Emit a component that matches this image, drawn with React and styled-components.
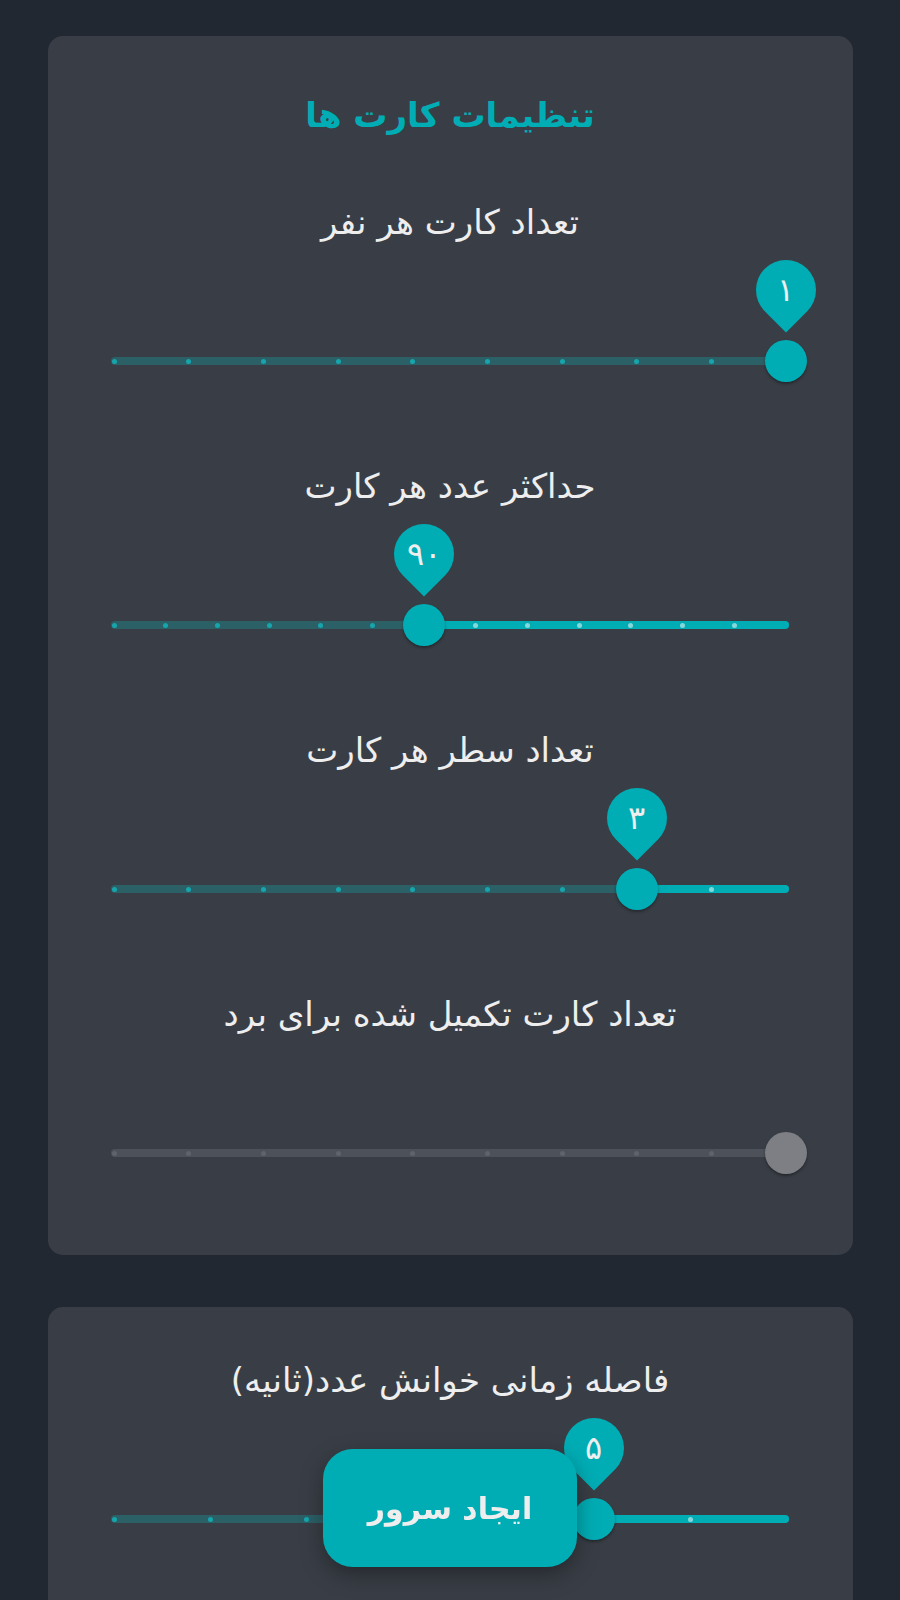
import React from "react";
import styled, { createGlobalStyle } from "styled-components";

const Teal = "#00adb5";
const Text = "#eeeeee";

const GlobalStyle = createGlobalStyle`
  html, body {
    margin: 0;
    padding: 0;
    background-color: #222831;
  }
  body {
    font-family: "DejaVu Sans", sans-serif;
    color: ${Text};
  }
`;

export const Page = styled.div`
  display: flex;
  flex-direction: column;
  gap: 52px;
  padding: 36px 0 40px;
  direction: rtl;
`;

export const Card = styled.div`
  display: flex;
  flex-direction: column;
  margin: 0 47px 0 48px;
  padding: ${(p) => (p.$first ? "49px" : "48px")} 64px 80px 63px;
  background-color: #393e46;
  border-radius: 15px;
`;

export const Title = styled.h1`
  margin: 0 0 52px;
  height: 60px;
  line-height: 60px;
  text-align: center;
  font-size: 34px;
  font-weight: bold;
  color: ${Teal};
`;

export const Setting = styled.div`
  display: flex;
  flex-direction: column;
  & + & {
    margin-top: 78px;
  }
`;

export const Label = styled.div`
  height: 50px;
  line-height: 50px;
  margin-bottom: 92px;
  text-align: center;
  font-size: 34px;
  white-space: nowrap;
`;

export const SliderRoot = styled.div`
  position: relative;
  height: 44px;
  direction: ltr;
`;

export const Rail = styled.div`
  position: absolute;
  left: 0;
  right: 0;
  top: 18px;
  height: 8px;
  border-radius: 4px;
  background-color: ${(p) => (p.$disabled ? "#4d5159" : "#2b6067")};
`;

export const Track = styled.div`
  position: absolute;
  right: 0;
  top: 18px;
  height: 8px;
  border-radius: 4px;
  background-color: ${Teal};
`;

export const Mark = styled.span`
  position: absolute;
  top: 19.5px;
  width: 5px;
  height: 5px;
  margin-left: -2.5px;
  border-radius: 50%;
  background-color: ${(p) =>
    p.$disabled ? "#60636a" : p.$active ? "#86d6da" : "#17a5ad"};
`;

export const Thumb = styled.span`
  position: absolute;
  top: 1px;
  width: 42px;
  height: 42px;
  margin-left: -21px;
  border-radius: 50%;
  background-color: ${(p) => (p.$disabled ? "#7d7f85" : Teal)};
  box-shadow: 0 2px 3px rgba(0, 0, 0, 0.35);
`;

export const ValueLabel = styled.span`
  position: absolute;
  top: -80px;
  left: -9px;
  width: 60px;
  height: 60px;
  display: flex;
  align-items: center;
  justify-content: center;
  border-radius: 50% 50% 50% 0;
  background-color: ${Teal};
  transform: rotate(-45deg);
  span {
    transform: rotate(45deg);
    font-size: 32px;
    color: ${Text};
    direction: rtl;
  }
`;

export const FloatingButton = styled.button`
  position: fixed;
  left: 50%;
  bottom: 33px;
  transform: translateX(-50%);
  width: 254px;
  height: 118px;
  border: none;
  border-radius: 30px;
  background-color: ${Teal};
  color: ${Text};
  font-family: "DejaVu Sans", sans-serif;
  font-size: 30px;
  font-weight: bold;
  direction: rtl;
  box-shadow: 0 8px 22px rgba(0, 0, 0, 0.35);
  cursor: pointer;
`;

const RAIL_PAD = 3;
const RAIL_SPAN = 672;

// steps are counted from the right edge because the slider runs rtl
function Slider({ steps, index, value, disabled }) {
  const xOf = (i) => RAIL_PAD + (1 - i / (steps - 1)) * RAIL_SPAN;
  const thumbX = xOf(index);

  return (
    <SliderRoot>
      <Rail $disabled={disabled} />
      {!disabled && index > 0 && <Track style={{ left: thumbX }} />}
      {Array.from({ length: steps }).map((_, i) =>
        i === 0 && index > 0 && !disabled ? null : (
          <Mark
            key={i}
            $disabled={disabled}
            $active={i < index}
            style={{ left: xOf(i) }}
          />
        )
      )}
      <Thumb $disabled={disabled} style={{ left: thumbX }}>
        {!disabled && (
          <ValueLabel>
            <span>{value}</span>
          </ValueLabel>
        )}
      </Thumb>
    </SliderRoot>
  );
}

function SettingRow({ label, ...slider }) {
  return (
    <Setting>
      <Label>{label}</Label>
      <Slider {...slider} />
    </Setting>
  );
}

export default function App() {
  return (
    <>
      <GlobalStyle />
      <Page>
        <Card $first>
          <Title>تنظیمات کارت ها</Title>
          <SettingRow label="تعداد کارت هر نفر" steps={10} index={0} value="۱" />
          <SettingRow label="حداکثر عدد هر کارت" steps={14} index={7} value="۹۰" />
          <SettingRow label="تعداد سطر هر کارت" steps={10} index={2} value="۳" />
          <SettingRow
            label="تعداد کارت تکمیل شده برای برد"
            steps={10}
            index={0}
            disabled
          />
        </Card>
        <Card>
          <SettingRow
            label="فاصله زمانی خوانش عدد(ثانیه)"
            steps={8}
            index={2}
            value="۵"
          />
        </Card>
      </Page>
      <FloatingButton>ایجاد سرور</FloatingButton>
    </>
  );
}
